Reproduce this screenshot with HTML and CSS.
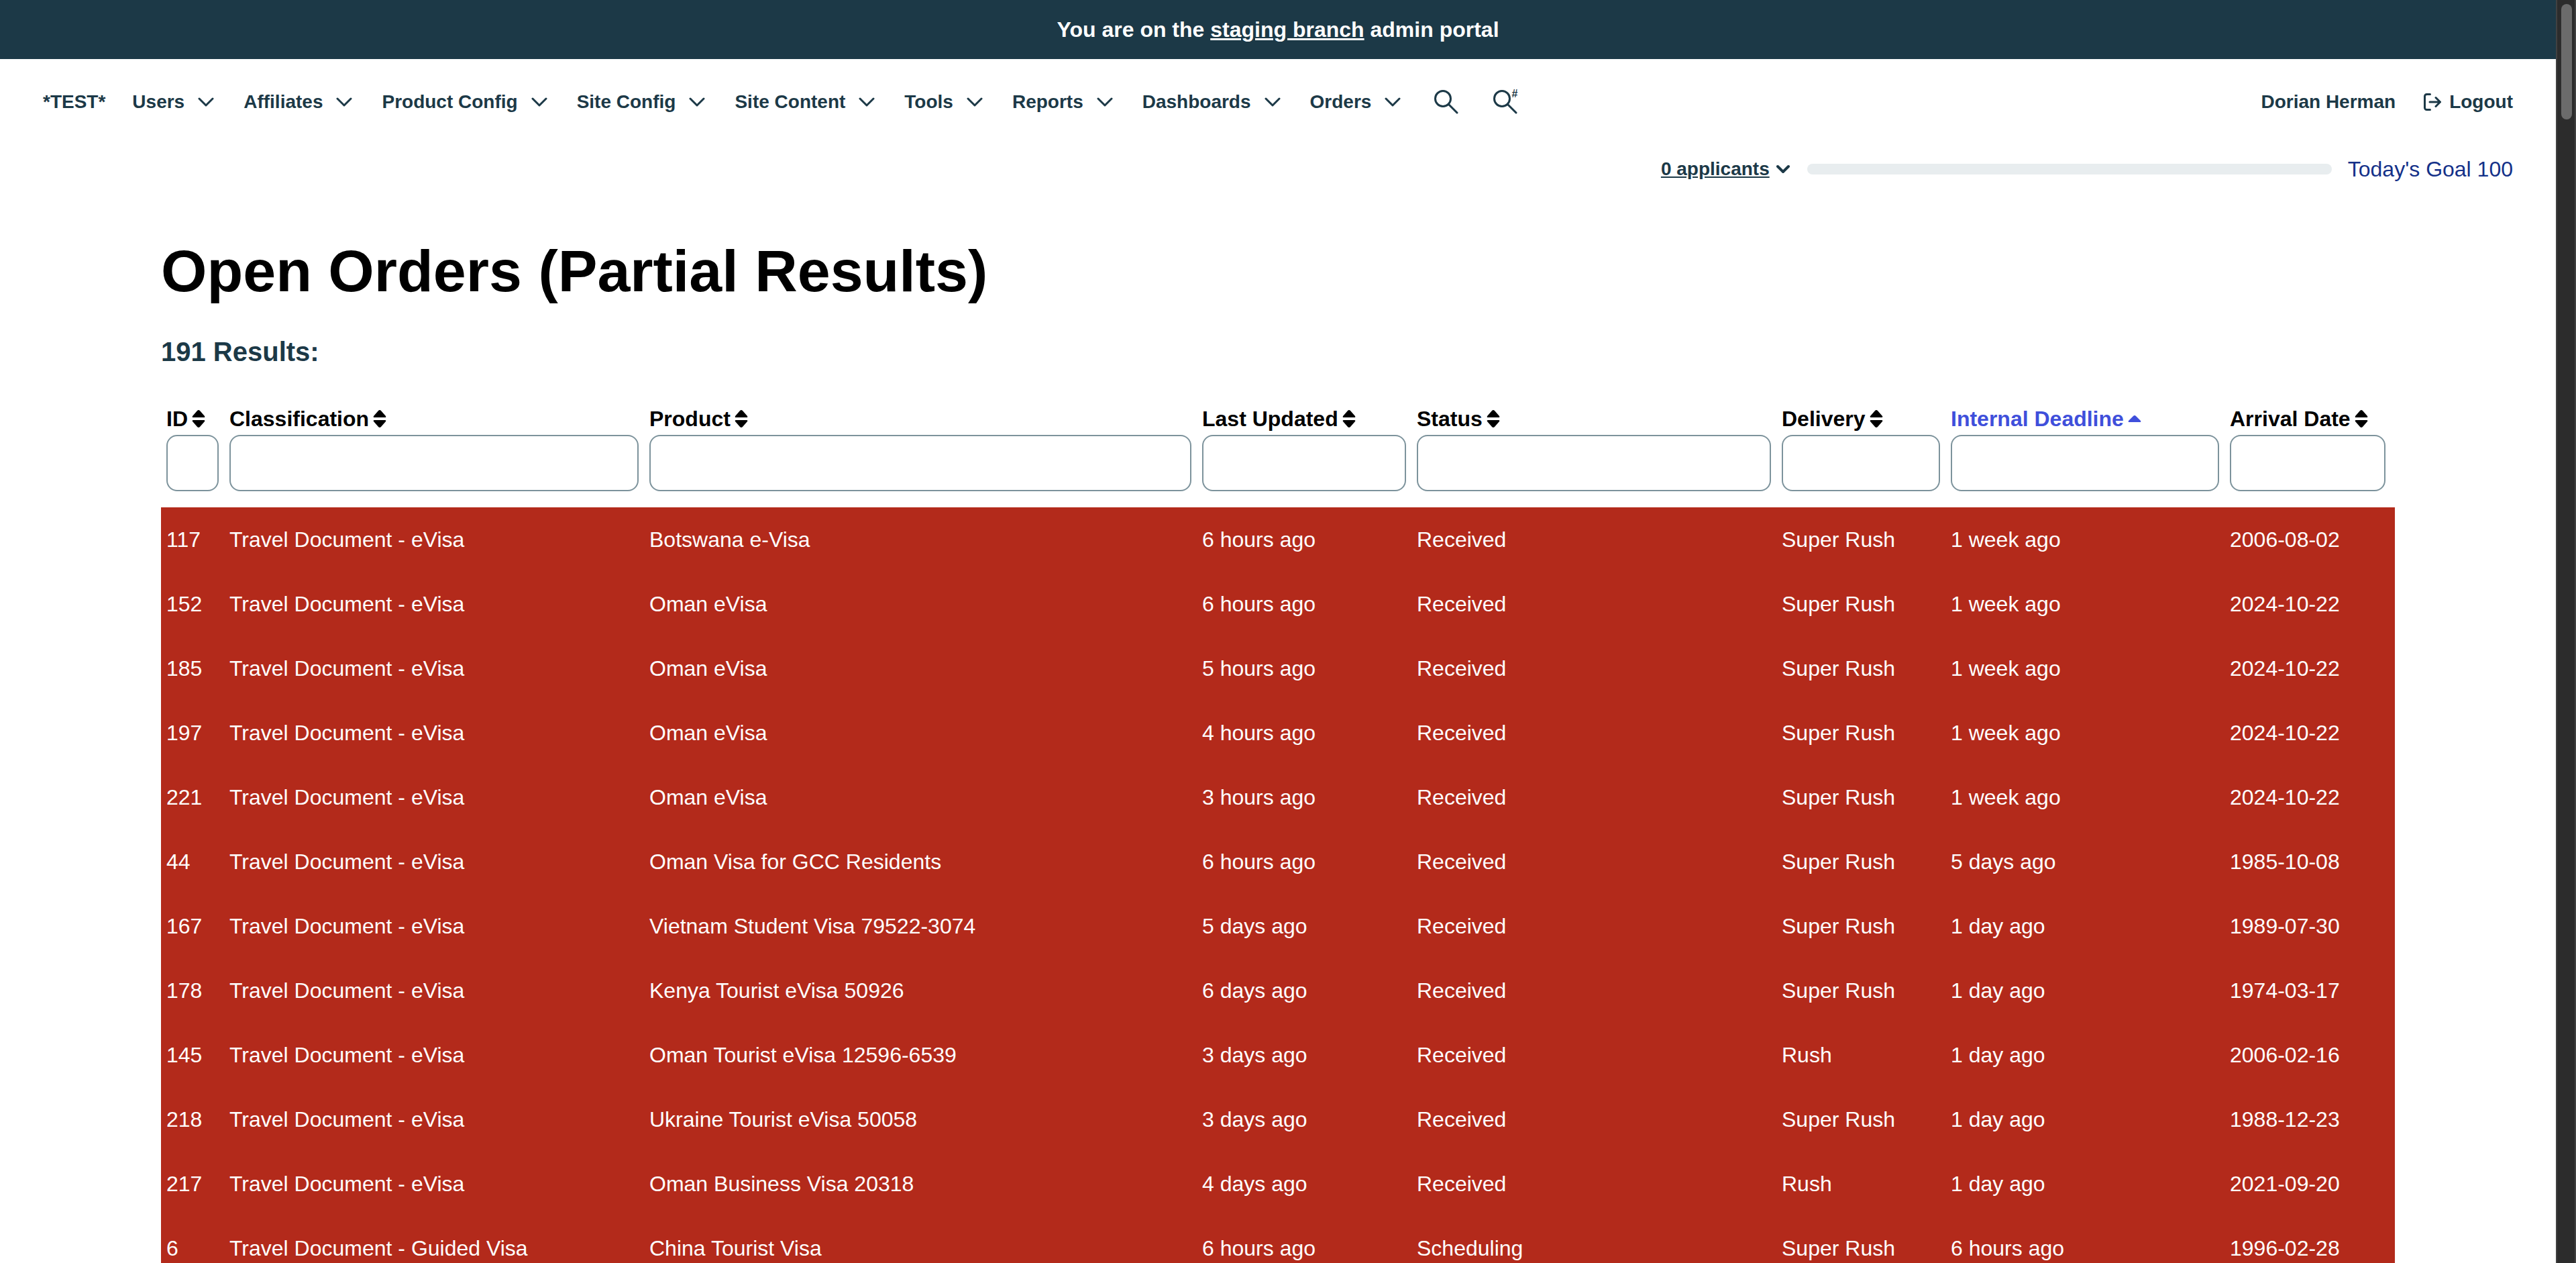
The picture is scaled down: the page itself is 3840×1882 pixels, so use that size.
FILE: index.html
```
<!DOCTYPE html>
<html lang="en">
<head>
<meta charset="utf-8">
<title>Open Orders</title>
<link rel="stylesheet" href="styles.css">
</head>
<body>
<svg class="sprite" aria-hidden="true">
  <symbol id="chevron" viewBox="0 0 24 14"><path d="M2 2l10 10L22 2" fill="none" stroke="currentColor" stroke-width="3" stroke-linecap="round" stroke-linejoin="round"/></symbol>
  <symbol id="caret" viewBox="0 0 20 14"><path d="M2 3l8 8 8-8" fill="none" stroke="currentColor" stroke-width="4" stroke-linecap="round" stroke-linejoin="round"/></symbol>
  <symbol id="search" viewBox="0 0 36 36"><g fill="none" stroke="currentColor" stroke-width="3" stroke-linecap="round"><circle cx="13" cy="13" r="11.500"/><path d="M22 22l12 12"/></g></symbol>
  <symbol id="logout" viewBox="0 0 26 26"><g fill="none" stroke="currentColor" stroke-width="3" stroke-linecap="round" stroke-linejoin="round"><path d="M9.500 1.500H4.500a3 3 0 0 0-3 3v17a3 3 0 0 0 3 3h5M9 13h15M18 6.500l6.500 6.500-6.500 6.500"/></g></symbol>
  <symbol id="sort" viewBox="0 0 20 26"><path d="M10 0q1 0 2 1l7 8q1 2-1 2H2q-2 0-1-2l7-8q1-1 2-1zM10 26q1 0 2-1l7-8q1-2-1-2H2q-2 0-1 2l7 8q1 1 2 1z" fill="currentColor"/></symbol>
  <symbol id="sort-up" viewBox="0 0 20 26"><path d="M10 8q1 0 2 1l7 7q1 2-1 2H2q-2 0-1-2l7-7q1-1 2-1z" fill="currentColor"/></symbol>
</svg>
<div class="app">
  <div class="page">
    <div class="banner">You are on the <a href="#">staging branch</a> admin portal</div>
    <header class="topbar">
      <nav class="menu" aria-label="Main">
        <a class="menu-link" href="#">*TEST*</a>
        <button class="menu-item" type="button">Users<svg class="chevron"><use href="#chevron"/></svg></button>
        <button class="menu-item" type="button">Affiliates<svg class="chevron"><use href="#chevron"/></svg></button>
        <button class="menu-item" type="button">Product Config<svg class="chevron"><use href="#chevron"/></svg></button>
        <button class="menu-item" type="button">Site Config<svg class="chevron"><use href="#chevron"/></svg></button>
        <button class="menu-item" type="button">Site Content<svg class="chevron"><use href="#chevron"/></svg></button>
        <button class="menu-item" type="button">Tools<svg class="chevron"><use href="#chevron"/></svg></button>
        <button class="menu-item" type="button">Reports<svg class="chevron"><use href="#chevron"/></svg></button>
        <button class="menu-item" type="button">Dashboards<svg class="chevron"><use href="#chevron"/></svg></button>
        <button class="menu-item" type="button">Orders<svg class="chevron"><use href="#chevron"/></svg></button>
        <button class="search" type="button" aria-label="Search"><svg class="glass"><use href="#search"/></svg></button>
        <button class="search" type="button" aria-label="Search by number"><svg class="glass"><use href="#search"/></svg><span class="hash">#</span></button>
      </nav>
      <div class="account">
        <a class="menu-link" href="#">Dorian Herman</a>
        <a class="logout" href="#"><svg class="logout-icon"><use href="#logout"/></svg>Logout</a>
      </div>
    </header>
    <div class="goal">
      <button class="applicants" type="button"><span class="count">0 applicants</span><svg class="caret"><use href="#caret"/></svg></button>
      <div class="track" role="progressbar" aria-label="Applicants today" aria-valuenow="0" aria-valuemin="0" aria-valuemax="100"></div>
      <span class="target">Today's Goal 100</span>
    </div>
    <main class="content">
      <h1>Open Orders (Partial Results)</h1>
      <h2>191 Results:</h2>
      <table class="orders">
        <colgroup><col class="c-id"><col class="c-class"><col class="c-product"><col class="c-updated"><col class="c-status"><col class="c-delivery"><col class="c-deadline"><col class="c-arrival"></colgroup>
        <thead>
          <tr>
            <th scope="col"><label for="f-id">ID<svg class="sort"><use href="#sort"/></svg></label><input id="f-id" type="text"></th>
            <th scope="col"><label for="f-class">Classification<svg class="sort"><use href="#sort"/></svg></label><input id="f-class" type="text"></th>
            <th scope="col"><label for="f-product">Product<svg class="sort"><use href="#sort"/></svg></label><input id="f-product" type="text"></th>
            <th scope="col"><label for="f-updated">Last Updated<svg class="sort"><use href="#sort"/></svg></label><input id="f-updated" type="text"></th>
            <th scope="col"><label for="f-status">Status<svg class="sort"><use href="#sort"/></svg></label><input id="f-status" type="text"></th>
            <th scope="col"><label for="f-delivery">Delivery<svg class="sort"><use href="#sort"/></svg></label><input id="f-delivery" type="text"></th>
            <th scope="col" class="sorted" aria-sort="ascending"><label for="f-deadline">Internal Deadline<svg class="sort"><use href="#sort-up"/></svg></label><input id="f-deadline" type="text"></th>
            <th scope="col"><label for="f-arrival">Arrival Date<svg class="sort"><use href="#sort"/></svg></label><input id="f-arrival" type="text"></th>
          </tr>
        </thead>
        <tbody>
          <tr><td>117</td><td>Travel Document - eVisa</td><td>Botswana e-Visa</td><td>6 hours ago</td><td>Received</td><td>Super Rush</td><td>1 week ago</td><td>2006-08-02</td></tr>
          <tr><td>152</td><td>Travel Document - eVisa</td><td>Oman eVisa</td><td>6 hours ago</td><td>Received</td><td>Super Rush</td><td>1 week ago</td><td>2024-10-22</td></tr>
          <tr><td>185</td><td>Travel Document - eVisa</td><td>Oman eVisa</td><td>5 hours ago</td><td>Received</td><td>Super Rush</td><td>1 week ago</td><td>2024-10-22</td></tr>
          <tr><td>197</td><td>Travel Document - eVisa</td><td>Oman eVisa</td><td>4 hours ago</td><td>Received</td><td>Super Rush</td><td>1 week ago</td><td>2024-10-22</td></tr>
          <tr><td>221</td><td>Travel Document - eVisa</td><td>Oman eVisa</td><td>3 hours ago</td><td>Received</td><td>Super Rush</td><td>1 week ago</td><td>2024-10-22</td></tr>
          <tr><td>44</td><td>Travel Document - eVisa</td><td>Oman Visa for GCC Residents</td><td>6 hours ago</td><td>Received</td><td>Super Rush</td><td>5 days ago</td><td>1985-10-08</td></tr>
          <tr><td>167</td><td>Travel Document - eVisa</td><td>Vietnam Student Visa 79522-3074</td><td>5 days ago</td><td>Received</td><td>Super Rush</td><td>1 day ago</td><td>1989-07-30</td></tr>
          <tr><td>178</td><td>Travel Document - eVisa</td><td>Kenya Tourist eVisa 50926</td><td>6 days ago</td><td>Received</td><td>Super Rush</td><td>1 day ago</td><td>1974-03-17</td></tr>
          <tr><td>145</td><td>Travel Document - eVisa</td><td>Oman Tourist eVisa 12596-6539</td><td>3 days ago</td><td>Received</td><td>Rush</td><td>1 day ago</td><td>2006-02-16</td></tr>
          <tr><td>218</td><td>Travel Document - eVisa</td><td>Ukraine Tourist eVisa 50058</td><td>3 days ago</td><td>Received</td><td>Super Rush</td><td>1 day ago</td><td>1988-12-23</td></tr>
          <tr><td>217</td><td>Travel Document - eVisa</td><td>Oman Business Visa 20318</td><td>4 days ago</td><td>Received</td><td>Rush</td><td>1 day ago</td><td>2021-09-20</td></tr>
          <tr><td>6</td><td>Travel Document - Guided Visa</td><td>China Tourist Visa</td><td>6 hours ago</td><td>Scheduling</td><td>Super Rush</td><td>6 hours ago</td><td>1996-02-28</td></tr>
        </tbody>
      </table>
    </main>
  </div>
  <div class="scrollbar" aria-hidden="true"><div class="thumb"></div></div>
</div>
</body>
</html>
```
FILE: styles.css
```
* { box-sizing: border-box; }

body {
  margin: 0;
  background: #fff;
  color: #1c3947;
  font-family: "Liberation Sans", Arial, sans-serif;
  font-size: 32px;
}

a { color: inherit; }

button {
  border: 0;
  padding: 0;
  background: none;
  color: inherit;
  font: inherit;
  cursor: pointer;
}

.sprite {
  position: absolute;
  width: 0;
  height: 0;
}

.app {
  display: flex;
  height: 100vh;
  overflow: hidden;
}

.page {
  flex: 1;
  min-width: 0;
}

.banner {
  padding: 24px;
  background: #1c3947;
  color: #fff;
  font-weight: bold;
  line-height: 40px;
  text-align: center;
}

.banner a {
  text-decoration-thickness: 3px;
}

.topbar {
  display: flex;
  align-items: center;
  justify-content: space-between;
  height: 128px;
  padding: 0 64px;
  font-size: 28px;
  font-weight: bold;
}

.menu,
.account {
  display: flex;
  align-items: center;
  gap: 40px;
}

.account {
  gap: 42px;
}

.menu-link {
  text-decoration: none;
}

.menu-item {
  display: flex;
  align-items: center;
  gap: 20px;
  padding-right: 4px;
}

.chevron {
  width: 24px;
  height: 14px;
}

.search {
  display: flex;
  position: relative;
  margin: 0 6px;
}

.glass {
  width: 36px;
  height: 36px;
}

.hash {
  position: absolute;
  top: 0;
  right: 0;
  font-size: 16px;
  line-height: 12px;
}

.logout {
  display: flex;
  align-items: center;
  gap: 12px;
  text-decoration: none;
}

.logout-icon {
  width: 26px;
  height: 26px;
}

.goal {
  display: flex;
  align-items: center;
  justify-content: flex-end;
  gap: 24px;
  height: 72px;
  padding: 0 64px;
}

.applicants {
  display: flex;
  align-items: center;
  gap: 10px;
  padding-right: 2px;
  font-size: 28px;
  font-weight: bold;
}

.count {
  text-decoration: underline;
}

.caret {
  width: 20px;
  height: 14px;
}

.track {
  width: 782px;
  height: 16px;
  border-radius: 8px;
  background: #e8edef;
}

.target {
  color: #143189;
}

.content {
  padding: 0 240px;
}

h1 {
  margin: 64px 0 0;
  color: #000;
  font-size: 88px;
  line-height: 104px;
}

h2 {
  margin: 44px 0 0;
  font-size: 40px;
  line-height: 48px;
}

.orders {
  width: 100%;
  margin-top: 52px;
  border-collapse: collapse;
  table-layout: fixed;
}

.c-id { width: 94px; }
.c-class { width: 626px; }
.c-product { width: 824px; }
.c-updated { width: 320px; }
.c-status { width: 544px; }
.c-delivery { width: 252px; }
.c-deadline { width: 416px; }

th {
  padding: 0 8px 24px;
  color: #000;
  text-align: left;
}

th:last-child { padding-right: 14px; }

th.sorted { color: #3f4fdb; }

th label {
  display: flex;
  align-items: center;
  gap: 6px;
  line-height: 48px;
  white-space: nowrap;
}

.sort {
  width: 20px;
  height: 26px;
}

th input {
  display: block;
  width: 100%;
  height: 84px;
  padding: 0 20px;
  border: 2px solid #7d939c;
  border-radius: 16px;
  background: #fff;
  font: inherit;
}

tbody {
  background: #b32a1b;
  color: #fff;
}

td {
  height: 96px;
  padding: 0 8px;
}

.scrollbar {
  width: 30px;
  padding: 6px 4px 6px 6px;
  border-left: 2px solid #414141;
  border-right: 2px solid #414141;
  background: #2c2c2c;
}

.thumb {
  height: 172px;
  border-radius: 8px;
  background: #6b6b6b;
}
```
